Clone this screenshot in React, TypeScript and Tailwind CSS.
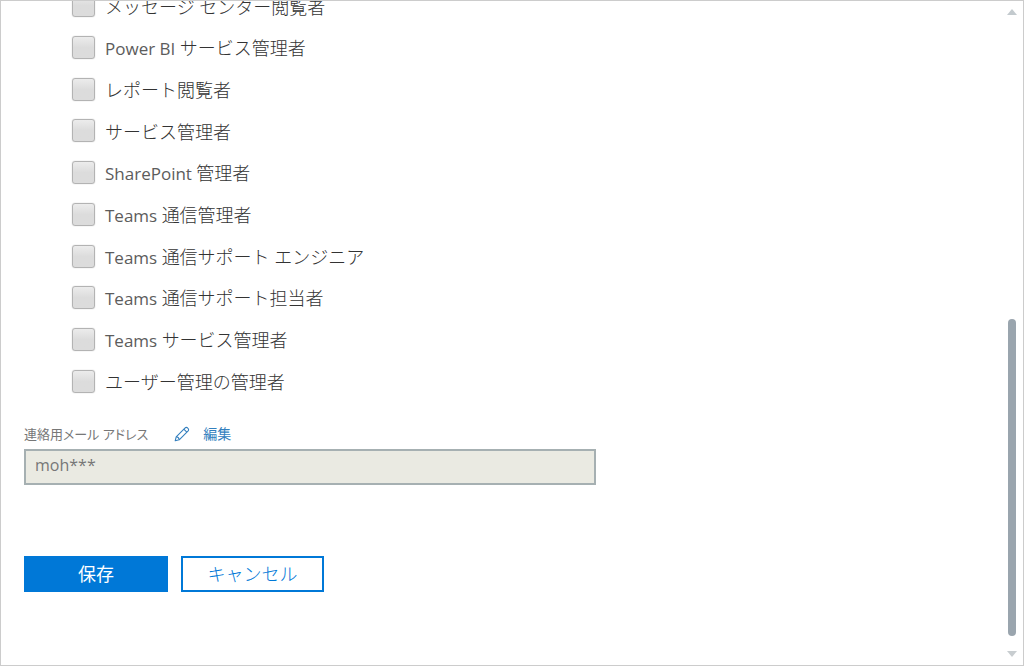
import React from "react";

type Role = { product?: string; name: string };

const roles: Role[] = [
  { name: "メッセージ センター閲覧者" },
  { product: "Power BI", name: "サービス管理者" },
  { name: "レポート閲覧者" },
  { name: "サービス管理者" },
  { product: "SharePoint", name: "管理者" },
  { product: "Teams", name: "通信管理者" },
  { product: "Teams", name: "通信サポート エンジニア" },
  { product: "Teams", name: "通信サポート担当者" },
  { product: "Teams", name: "サービス管理者" },
  { name: "ユーザー管理の管理者" },
];

function RoleOption({ id, role }: { id: string; role: Role }) {
  return (
    <li className="flex items-center gap-2.5">
      <input
        id={id}
        type="checkbox"
        className="size-[23px] shrink-0 appearance-none rounded-[3px] border border-[#b3b3b3] bg-linear-to-b from-[#ececec] to-[#dcdcdc] to-50% shadow-[0_0_1px_#aaa] checked:border-[#0078d7]"
      />
      <label htmlFor={id} className="pt-0.5 text-lg leading-6 font-light text-[#333]">
        {role.product && <span className="text-[17px] font-normal text-[#5c5c5c]">{role.product} </span>}
        {role.name}
      </label>
    </li>
  );
}

function PencilIcon() {
  return (
    <svg viewBox="0 0 16 16" className="size-4" fill="none" stroke="currentColor" strokeWidth="1.1" strokeLinejoin="round" aria-hidden="true">
      <path d="M1.2 14.8 2.2 10.8 10.9 2.1Q12.4.7 13.8 2.2 15.3 3.6 13.9 5.1L5.2 13.8Z" />
      <path d="M2.2 10.8Q4.9 11.1 5.2 13.8M9.8 3.2 12.8 6.2" />
    </svg>
  );
}

function ScrollBar() {
  return (
    <div className="flex w-[22px] shrink-0 flex-col items-center py-2" aria-hidden="true">
      <svg viewBox="0 0 10 6" className="h-1.5 w-2.5 fill-[#c3cace]">
        <path d="M0 6 5 0 10 6Z" />
      </svg>
      <div className="flex w-2 flex-1 flex-col justify-end pb-[15px]">
        <div className="h-[51%] rounded-full bg-[#9aa5ae]" />
      </div>
      <svg viewBox="0 0 10 6" className="h-1.5 w-2.5 fill-[#c8cdd0]">
        <path d="M0 0 5 6 10 0Z" />
      </svg>
    </div>
  );
}

export default function App() {
  return (
    <div className="flex h-screen overflow-hidden border border-[#ccc] bg-white font-['Open_Sans','Noto_Sans_CJK_JP',sans-serif] font-normal">
      <form className="min-w-0 flex-1 overflow-hidden pl-[23px]" onSubmit={(e) => e.preventDefault()}>
        <ul className="-mt-4 grid h-[417px] auto-rows-fr pl-12">
          {roles.map((role, i) => (
            <RoleOption key={i} id={`role-${i}`} role={role} />
          ))}
        </ul>

        <div className="mt-[22px] flex h-5 items-center text-[#777]">
          <label htmlFor="contact-mail" className="text-[13px] leading-5 [font-feature-settings:'palt']">
            連絡用メール アドレス
          </label>
          <button type="button" className="ml-[26px] flex items-center gap-[13px] text-sm leading-5 text-[#337fbe]">
            <PencilIcon />
            編集
          </button>
        </div>
        <input
          id="contact-mail"
          type="text"
          readOnly
          value="moh***"
          className="mt-[5px] block h-9 w-[572px] max-w-full border-2 border-[#a6b0b2] bg-[#eaeae2] px-[9px] pb-1 text-base text-[#777]"
        />

        <div className="mt-[71px] flex gap-[13px]">
          <button type="submit" className="h-9 w-36 bg-[#0078d7] text-lg leading-6 text-white">
            保存
          </button>
          <button type="button" className="h-9 w-[143px] border-2 border-[#0078d7] bg-white text-lg leading-6 font-light text-[#0078d7]">
            キャンセル
          </button>
        </div>
      </form>
      <ScrollBar />
    </div>
  );
}
